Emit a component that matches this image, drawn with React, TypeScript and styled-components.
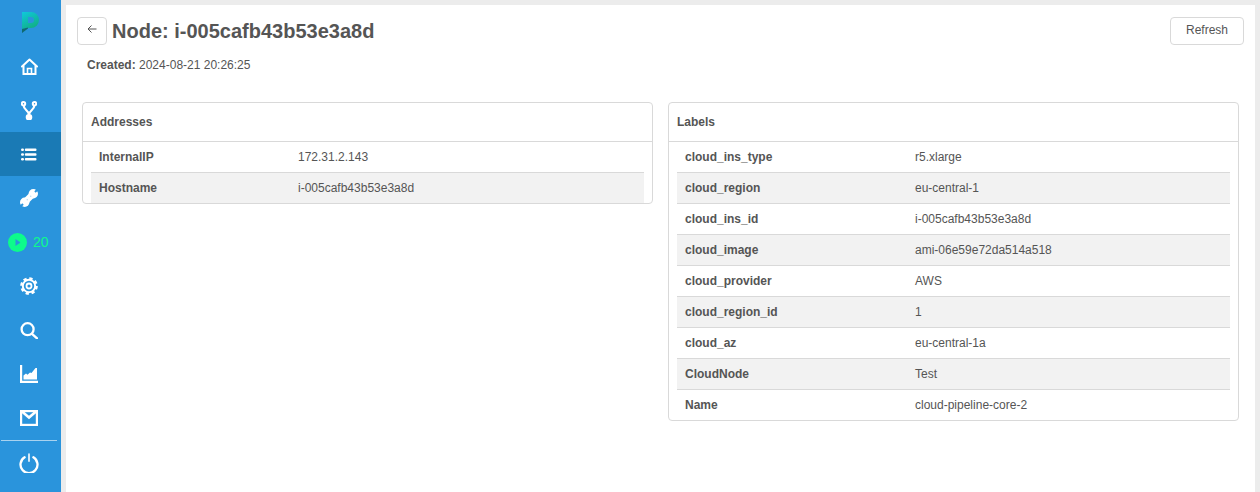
import React from 'react'
import styled, { createGlobalStyle } from 'styled-components'

const addresses = [
  ['InternalIP', '172.31.2.143'],
  ['Hostname', 'i-005cafb43b53e3a8d'],
]

const labels = [
  ['cloud_ins_type', 'r5.xlarge'],
  ['cloud_region', 'eu-central-1'],
  ['cloud_ins_id', 'i-005cafb43b53e3a8d'],
  ['cloud_image', 'ami-06e59e72da514a518'],
  ['cloud_provider', 'AWS'],
  ['cloud_region_id', '1'],
  ['cloud_az', 'eu-central-1a'],
  ['CloudNode', 'Test'],
  ['Name', 'cloud-pipeline-core-2'],
]

export default function App() {
  return (
    <>
      <GlobalStyle />
      <Page>
        <Sidebar>
          <LogoSlot>
            <svg width="17" height="21" viewBox="0 0 17 21">
              <defs>
                <linearGradient id="logo" x1="0" y1="0" x2="0.5" y2="1">
                  <stop offset="0" stopColor="#0fc8dc" />
                  <stop offset="1" stopColor="#10b088" />
                </linearGradient>
              </defs>
              <path fill="url(#logo)" fillRule="evenodd" d="M0 0h9a8 8 0 0 1 0 16H6v-.500L0 17zM6 5v6h3a3 3 0 0 0 0-6z" />
              <path fill="#0f6a70" d="M0 17l6-1.500V16.500L0 21z" />
            </svg>
          </LogoSlot>
          <NavItem>
            <svg width="17" height="17" viewBox="0 0 17 17" fill="none" stroke="#fff" strokeWidth="2">
              <path d="M1 8.500 8.500 1.500 16 8.500" strokeLinejoin="round" strokeLinecap="round" />
              <path d="M2.500 7.500V16H14.500V7.500" />
              <path d="M6.500 15.500V10.500H10.500V15.500" strokeWidth="1.600" />
            </svg>
          </NavItem>
          <NavItem>
            <svg width="16" height="19" viewBox="0 0 16 19" fill="none" stroke="#fff" strokeWidth="2">
              <circle cx="2.500" cy="2.800" r="1.700" />
              <circle cx="13.500" cy="2.800" r="1.700" />
              <circle cx="8" cy="16.300" r="2.300" fill="#fff" />
              <path d="M2.700 4.500C2.700 9.500 8 9 8 14M13.300 4.500C13.300 9.500 8 9 8 14" strokeWidth="2.200" />
            </svg>
          </NavItem>
          <NavItem $active>
            <svg width="16" height="13" viewBox="0 0 16 13" fill="#fff">
              <rect x="0" y="0.500" width="3" height="2.400" rx="1.200" />
              <rect x="0" y="5.300" width="3" height="2.400" rx="1.200" />
              <rect x="0" y="10.100" width="3" height="2.400" rx="1.200" />
              <rect x="3.800" y="0.500" width="11.700" height="2.400" rx="1" />
              <rect x="3.800" y="5.300" width="11.700" height="2.400" rx="1" />
              <rect x="3.800" y="10.100" width="11.700" height="2.400" rx="1" />
            </svg>
          </NavItem>
          <NavItem>
            <svg width="18" height="18" viewBox="0 0 18 18">
              <circle cx="13.300" cy="4.700" r="4.700" fill="#fff" />
              <circle cx="4.700" cy="13.300" r="4.700" fill="#fff" />
              <path d="M5 13 13 5" stroke="#fff" strokeWidth="6.400" />
              <path d="M15 3 18 0M3 15 0 18" stroke="#2a94dc" strokeWidth="2" />
              <circle cx="7.300" cy="10.700" r="0.800" fill="#bcdcf3" />
              <circle cx="10.700" cy="7.300" r="0.800" fill="#bcdcf3" />
            </svg>
          </NavItem>
          <RunningItem>
            <PlayBadge>
              <svg width="6" height="7" viewBox="0 0 6 7">
                <path d="M.5 0 5.500 3.500.5 7z" fill="#2a94dc" />
              </svg>
            </PlayBadge>
            <RunningCount>20</RunningCount>
          </RunningItem>
          <NavItem>
            <svg width="18" height="18" viewBox="0 0 18 18" fill="none" stroke="#fff">
              <circle cx="9" cy="9" r="7.400" strokeWidth="2.800" strokeDasharray="3.200 2.620" />
              <circle cx="9" cy="9" r="6.200" strokeWidth="2" />
              <circle cx="9" cy="9" r="2.500" strokeWidth="1.800" />
            </svg>
          </NavItem>
          <NavItem>
            <svg width="18" height="17" viewBox="0 0 18 17" fill="none" stroke="#fff" strokeWidth="2.300">
              <circle cx="7.600" cy="7.200" r="6" />
              <path d="M12 11.800 17 16.300" strokeLinecap="round" strokeWidth="2.400" />
            </svg>
          </NavItem>
          <NavItem>
            <svg width="18" height="18" viewBox="0 0 18 18" fill="#fff">
              <path d="M0 0h2.200v15.700H18V18H0z" />
              <path d="M3.500 14.500V10.500L6 8.500l1.500 1.200 2.500-2.200 1.500.6L15.500 3H17V14.500z" />
            </svg>
          </NavItem>
          <NavItem>
            <svg width="18" height="16" viewBox="0 0 18 16" fill="none" stroke="#fff" strokeWidth="2.200">
              <rect x="1.100" y="1.100" width="15.800" height="13.800" />
              <path d="M2 1.500 9 7.500 16 1.500" strokeWidth="2.600" />
            </svg>
          </NavItem>
          <SideDivider />
          <NavItem>
            <svg width="20" height="20" viewBox="0 0 20 20" fill="none" stroke="#fff" strokeLinecap="round">
              <path d="M5.600 4.300A8.500 8.500 0 1 0 14.400 4.300" strokeWidth="2.300" />
              <path d="M10 1.200V8" strokeWidth="2" stroke="#d3e8f7" />
            </svg>
          </NavItem>
        </Sidebar>
        <Main>
          <TopBar>
            <BackButton>
              <svg width="10" height="10" viewBox="0 0 10 10" fill="none" stroke="#555" strokeWidth="1">
                <path d="M9.500 5H1M4.500 1.500 1 5l3.500 3.500" />
              </svg>
            </BackButton>
            <Title>Node: i-005cafb43b53e3a8d</Title>
            <RefreshButton>Refresh</RefreshButton>
          </TopBar>
          <Created>
            <b>Created:</b> 2024-08-21 20:26:25
          </Created>
          <Cards>
            <InfoCard title="Addresses" rows={addresses} keyWidth={199} />
            <InfoCard title="Labels" rows={labels} keyWidth={230} />
          </Cards>
        </Main>
      </Page>
    </>
  )
}

function InfoCard({ title, rows, keyWidth }: { title: string; rows: string[][]; keyWidth: number }) {
  return (
    <Card>
      <CardHeader>{title}</CardHeader>
      <CardBody>
        {rows.map(([key, value], i) => (
          <Row key={key} $striped={i % 2 === 1} $first={i === 0}>
            <RowKey $width={keyWidth}>{key}</RowKey>
            <RowValue>{value}</RowValue>
          </Row>
        ))}
      </CardBody>
    </Card>
  )
}

const GlobalStyle = createGlobalStyle`
  html, body {
    margin: 0;
    padding: 0;
    background: #ececec;
    font-family: "Liberation Sans", Arial, sans-serif;
    overflow: hidden;
  }
`

const Page = styled.div`
  display: flex;
  height: 492px;
  color: #555;
`

const Sidebar = styled.nav`
  display: flex;
  flex-direction: column;
  flex: 0 0 61px;
  background: #2a94dc;
`

const LogoSlot = styled.div`
  display: flex;
  align-items: center;
  justify-content: center;
  height: 44px;
  padding-right: 1px;
`

const NavItem = styled.div<{ $active?: boolean }>`
  display: flex;
  align-items: center;
  justify-content: center;
  height: 44px;
  padding-right: 3px;
  background: ${p => (p.$active ? '#1a7ab5' : 'transparent')};
`

const RunningItem = styled.div`
  display: flex;
  align-items: center;
  height: 44px;
  padding-left: 8px;
  gap: 6px;
`

const PlayBadge = styled.span`
  display: flex;
  align-items: center;
  justify-content: center;
  width: 19px;
  height: 19px;
  padding-left: 1px;
  box-sizing: border-box;
  border-radius: 50%;
  background: #0dfb8b;
`

const RunningCount = styled.span`
  color: #0dfb8b;
  font-size: 14px;
`

const SideDivider = styled.div`
  height: 1px;
  margin: 0 4px 0 1px;
  background: #a9d2ef;
`

const Main = styled.main`
  flex: 0 0 1189px;
  margin: 5px 0 0 5px;
  background: #fff;
  padding: 12px 11px 0;
  box-sizing: border-box;
`

const TopBar = styled.div`
  display: flex;
  align-items: center;
  height: 28px;
`

const BackButton = styled.button`
  display: flex;
  align-items: center;
  justify-content: center;
  width: 30px;
  height: 28px;
  padding: 0 0 4px;
  background: #fff;
  border: 1px solid #d9d9d9;
  border-radius: 4px;
`

const Title = styled.h1`
  margin: 0 0 0 5px;
  font-size: 20px;
  font-weight: 700;
  color: #555;
`

const RefreshButton = styled.button`
  margin-left: auto;
  width: 74px;
  height: 28px;
  padding: 0 0 2px;
  background: #fff;
  border: 1px solid #d9d9d9;
  border-radius: 4px;
  color: #555;
  font-family: inherit;
  font-size: 12px;
`

const Created = styled.div`
  margin: 13px 0 0 10px;
  font-size: 12px;
  line-height: 14px;
  color: #555;
`

const Cards = styled.div`
  display: grid;
  grid-template-columns: 571px 571px;
  gap: 15px;
  align-items: start;
  margin: 30px 5px 0;
`

const Card = styled.section`
  border: 1px solid #d9d9d9;
  border-radius: 4px;
  background: #fff;
`

const CardHeader = styled.div`
  height: 38px;
  padding-left: 8px;
  border-bottom: 1px solid #d9d9d9;
  font-size: 12px;
  font-weight: 700;
  line-height: 38px;
`

const CardBody = styled.div`
  padding: 0 8px;
`

const Row = styled.div<{ $striped: boolean; $first: boolean }>`
  display: flex;
  height: 30px;
  border-top: ${p => (p.$first ? '0' : '1px solid #d9d9d9')};
  background: ${p => (p.$striped ? '#f2f2f2' : 'transparent')};
  font-size: 12px;
  line-height: 30px;
`

const RowKey = styled.div<{ $width: number }>`
  flex: 0 0 ${p => p.$width}px;
  padding-left: 8px;
  box-sizing: border-box;
  font-weight: 700;
`

const RowValue = styled.div`
  padding-left: 8px;
`
